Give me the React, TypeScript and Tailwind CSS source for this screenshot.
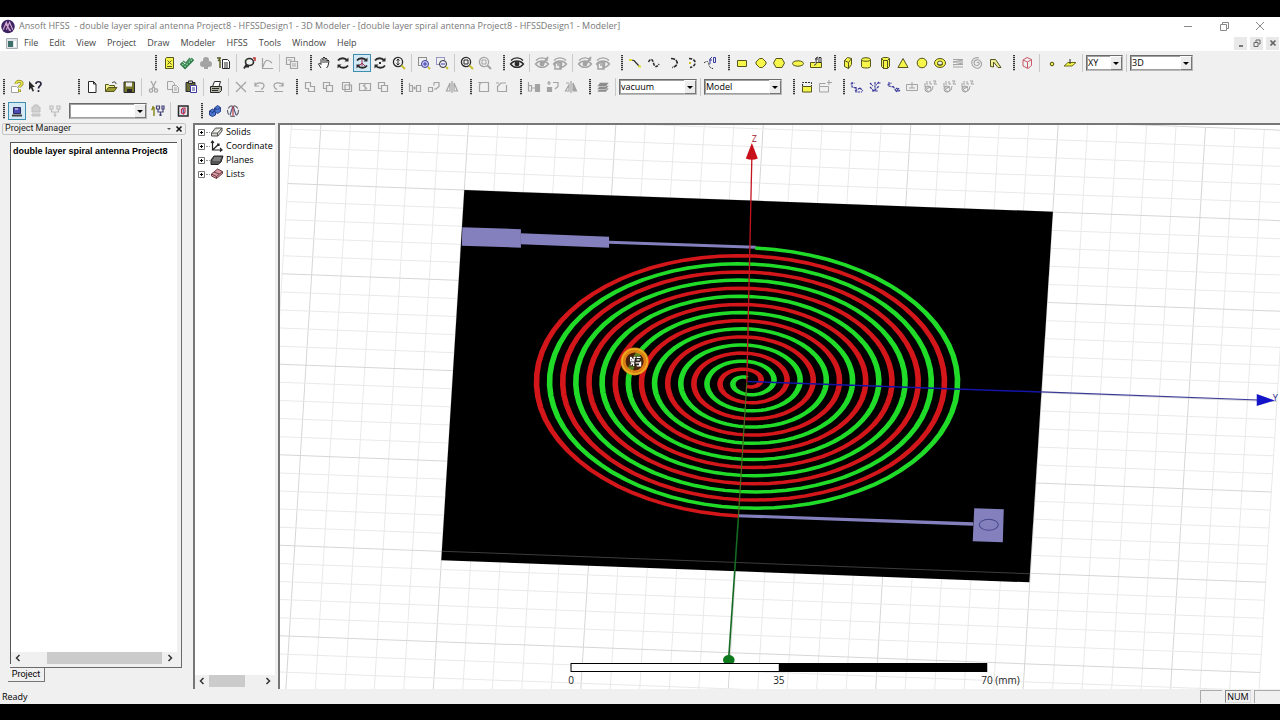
import React from "react";

const K = "#2a2a2a";
const G = "#a3a3a3";
const Y = "#f6f64a";
const O = "#55551c";
const B = "#3b3b9c";

const rot = (
  <g fill="none" stroke={K} strokeWidth="1.8">
    <path d="M3 5.5C5 2.5 10 2.5 12.5 5.5M13 10.5C11 13.5 6 13.5 3.500 10.500" />
    <path d="M13.500 2.500v4h-4zM2.500 13.500v-4h4z" fill={K} stroke="none" />
  </g>
);
const eye = (c: string) => (
  <g fill="none" stroke={c} strokeWidth="1.3">
    <path d="M2 5.500C5 2 11 2 14 5.500M1.500 9C5 5 11 5 14.500 9C11 13.500 5 13.500 1.500 9z" />
    <circle cx="8" cy="9" r="1.800" fill={c} />
  </g>
);
const lens = (c: string, h: string) => (
  <g fill="none" stroke={c} strokeWidth="1.300">
    <circle cx="7" cy="7" r="4.600" />
    <path d="M10.500 10.500l3.500 3.500" stroke={h} strokeWidth="2" />
  </g>
);
const axes = (k: number) => (
  <g fill="none" stroke={B} strokeWidth="1.200" strokeDasharray="2.500 .8">
    <path d={k === 1 ? "M3 3v5l4 1M1.500 5l4-1M7 8v5h6M6 12l5-3M11 9l3 3" : k === 2 ? "M8 3v9M3 8l4 4 5-5M3 4l3 3m6-4l-3 3M5 12h6M11 4h3" : "M3 3v4l4 1M1.500 6l4-2M7 7l3 5h4M10 9l4 3M10 13l3-4"} />
  </g>
);
const grayAxes = (
  <g fill="none" stroke={G}>
    <path d="M3 4v4l3 5 4-2 1-4M3 8h6M5 2v4M8 2v3h2M11 2h3l-2 3h3M5 10l3-2" />
    <circle cx="6" cy="10" r="3" />
  </g>
);

const art: Record<string, React.ReactNode> = {
  note: (<g><path d="M4.500 3.500l1-1h7v11h-8z" fill={Y} stroke={O} /><path d="M6.500 5.500l4 4M10.500 5.500l-4 4M6 11.500h5" stroke={O} /></g>),
  check: (<g fill="none"><path d="M2 8l4 4 8-8" stroke="#2b7a44" strokeWidth="3.400" /><path d="M3 9l3 2.500 7-7" stroke="#8ed0a4" strokeWidth="1.200" strokeDasharray="2 1" /><path d="M4 6l3 2 4-5" stroke="#3f8a58" strokeWidth="1.500" /></g>),
  club: (<g fill={G}><circle cx="8" cy="5" r="3" /><circle cx="5" cy="9" r="3" /><circle cx="11" cy="9" r="3" /><path d="M6 9h4v5H6z" /></g>),
  report: (<g><path d="M6.500 4.500h5l2 2v7h-7z" fill="#fff" stroke={K} /><path d="M8 8h4M8 10h4M8 12h4" stroke={K} /><path d="M1 3h4M4 5v8M2 6l2-2" stroke={O} strokeWidth="1.400" fill="none" /></g>),
  probe: (<g fill="none"><ellipse cx="8.500" cy="7" rx="4" ry="3.500" stroke={K} strokeWidth="1.600" /><path d="M5.500 9.500l-2.500 4M5 11.500h3" stroke={K} strokeWidth="1.800" /><path d="M12 3h2v3" stroke="#c03030" strokeWidth="1.500" /><path d="M6 3.500l-2 2" stroke="#3a8a4a" /></g>),
  plot: (<path d="M3.500 3v10.500H14M4 12C6 5 8 3 13 8" fill="none" stroke={G} strokeWidth="1.200" />),
  windows: (<g fill="#eee" stroke={G} strokeWidth="1.200"><path d="M2.500 2.500h8v7h-8z" /><path d="M6.500 6.500h7v7h-7z" /><path d="M4 5h4M8 9h4M8 11h4" /></g>),
  hand: (<path d="M5 13L2.500 9l1-1L5 9.500V4.500l1-1 1 1V3l1-1 1 1v1l1-1 1 1v2l1-1 1 1-1 5-1.500 2M7 4v4M9 4v4M11 5v3" fill="#fff" stroke={K} />),
  rot,
  rotAxis: (<g>{rot}<path d="M8 4v7M5 11l3-3 3 3" stroke="#a03050" fill="none" /></g>),
  rotPoint: (<g>{rot}<path d="M7 7h2v2H7z" fill={K} /></g>),
  zoomDyn: (<g>{lens(K, "#c8c030")}<path d="M7 4v6M5.500 5.500L7 4l1.500 1.500M5.500 8.500L7 10l1.500-1.500" stroke={K} fill="none" /></g>),
  zoomIn: (<g fill="none"><path d="M2.500 2.500h8v8h-8z" stroke={K} strokeDasharray="1 1" /><circle cx="9" cy="9" r="3.500" fill="#cfd0ff" stroke={B} /><path d="M7 9h4M9 7v4" stroke={B} /><path d="M12 12l2 2" stroke="#c8c030" strokeWidth="2" /></g>),
  zoomOut: (<g fill="none"><path d="M2.500 2.500h8v7h-8z" stroke={B} strokeDasharray="1 1" /><circle cx="9" cy="9" r="3.500" fill="#eef" stroke={K} /><path d="M7 9h4" stroke={B} /><path d="M12 12l2 2" stroke="#c8c030" strokeWidth="2" /></g>),
  fit: (<g>{lens(K, "#c8c030")}<path d="M5 5h4v4H5z" fill="none" stroke={K} /></g>),
  fitGray: (<g>{lens(G, G)}<path d="M5 5h4v4H5z" fill="none" stroke={G} /></g>),
  eye: eye(K),
  eyeCheck: (<g>{eye(G)}<path d="M7 6l2 3 5-7" stroke={G} fill="none" strokeWidth="2" /></g>),
  eyeBox: (<g>{eye(G)}<path d="M3 8h6v6H3zM5 10h3v4" stroke={G} fill="#eee" strokeWidth="1.500" /></g>),
  line: (<g fill="none"><path d="M4 5l3 .5 5 5.500" stroke={K} strokeWidth="1.200" /><path d="M2 4h3v2H2zM11 10.500h3v2h-3z" fill="#e0e030" /></g>),
  spline: (<path d="M2.500 7c2-4 4-3 5 1s3 5 5.500 1" fill="none" stroke={K} strokeWidth="1.500" strokeDasharray="3 1" />),
  arc: (<path d="M6 3.500c8 0 8 8 1 9" fill="none" stroke={K} strokeWidth="1.600" strokeDasharray="4 1" />),
  arcPt: (<g fill="none"><path d="M6 3.500c8 0 8 8 1 9" stroke={K} strokeWidth="1.600" strokeDasharray="3 1.500" /><path d="M6 7h2v2H6z" fill="#d0c020" /></g>),
  eqn: (<g fill="none"><path d="M2 8c3-3 5-1 5 1.500s2 4 4 4" stroke={K} strokeDasharray="2 1" /><path d="M8 9V4l2-2M7 5h3M11.500 2.500h2v5h-2z" stroke={B} /></g>),
  rect: (<path d="M3.500 5.500h9v6h-9z" fill={Y} stroke={O} />),
  oct: (<path d="M6.500 3.500h3l3.500 3.500v2l-3.500 3.500h-3L3 9V7z" fill={Y} stroke={O} />),
  hex: (<path d="M5 3.500h6l2.500 4.500-2.500 4.500H5L2.500 8z" fill={Y} stroke={O} />),
  ellipse: (<ellipse cx="8" cy="8.500" rx="5.500" ry="2.700" fill={Y} stroke={O} />),
  eqnSurf: (<g><path d="M2.500 7.500h11v5h-11z" fill={Y} stroke={O} /><path d="M6 10c3 0 2-2 2-7l2-1M7 4h3M11 2.500h2v5h-2z" fill="#fff" stroke={K} /></g>),
  box: (<g fill={Y} stroke={O}><path d="M4.500 5.500l3-3 4 1v6l-3 4-4-2z" /><path d="M4.500 5.500l4 2v6M8.500 7.500l3-4" fill="none" /></g>),
  cyl: (<g fill={Y} stroke={O}><path d="M3.500 4.500v7c0 2 9 2 9 0v-7" /><ellipse cx="8" cy="4.500" rx="4.500" ry="1.800" /></g>),
  prism: (<g fill={Y} stroke={O}><path d="M4.500 3.500l2-1h4l2 1v8l-2 2h-4l-2-2z" /><path d="M4.500 3.500l2 2h4l2-2M6.500 5.500v8M10.500 5.500v8" fill="none" /></g>),
  cone: (<path d="M8 3.500l5 9H3z" fill={Y} stroke={O} />),
  sphere: (<circle cx="8" cy="8" r="4.800" fill={Y} stroke={O} />),
  torus: (<g stroke={O} fill={Y}><ellipse cx="8" cy="8" rx="5.500" ry="4.500" /><ellipse cx="8" cy="8" rx="2.500" ry="2" fill="#eee" /><path d="M5 9c2 2 4 2 6 0" fill="none" /></g>),
  helix: (<path d="M3 4.500h10M3 7h10M3 9.500h10M3 12h10M13 5l-10 2M13 8l-10 2" stroke={G} fill="none" />),
  spiral: (<path d="M8 8c1-2 3 0 2 1.500S5 11 5 8s5-5 7-1-2 7-5 6-5-4-4-7 5-4 7-3" stroke={G} fill="none" strokeWidth="1.100" />),
  sweep: (<path d="M3.500 11.500V4.500h5l5.500 8h-3L6.500 7v5z" fill="#eeee9a" stroke={O} />),
  region: (<g fill="none" stroke="#c85864"><path d="M4 5l4-2.500 4.500 2v6L9 13.500 4 11z" /><path d="M4 5l4.500 2v6M8.500 7l4-2.500" /></g>),
  point: (<circle cx="8" cy="9" r="1.800" fill={Y} stroke="#4a4a10" />),
  plane: (<g><path d="M2 11l4-3.500h8L10 11z" fill={Y} stroke="#6c6c18" /><path d="M8 4v5" stroke={K} /></g>),
  help: (<g><path d="M2.500 7.500h5l2 2v4h-7z" fill="#fff" stroke={G} /><path d="M7 5c0-4 7-3 6 0-.5 1.500-2.500 1.500-2.500 3.500M10.500 10.500v2.500" fill="none" stroke="#8a8720" strokeWidth="3" /><path d="M7 5c0-4 7-3 6 0-.5 1.500-2.500 1.500-2.500 3.500M10.500 10.500v2" fill="none" stroke="#f0ec50" strokeWidth="1.500" /></g>),
  whatsThis: (<g><path d="M2 2l6 6H5.500l1.500 4-1.500.5L4 9l-2 2z" fill={K} /><path d="M9 5c0-3 5-3 5 0 0 2-2.500 2-2.500 4.500M11.500 11v2" fill="none" stroke="#26263c" strokeWidth="1.700" /></g>),
  new: (<path d="M4.500 2.500h5l2.500 2.500v8.500H4.500zM9.500 2.500V5H12" fill="#fff" stroke={K} />),
  open: (<g><path d="M2.500 12.500v-7h3l1 1h5v2" fill="#f0f090" stroke={O} /><path d="M2.500 12.500l3-4h8.500l-3 4z" fill="#9a9a30" stroke={O} /><path d="M9 4c2-2 4-1 4 1" fill="none" stroke={K} /></g>),
  save: (<g><path d="M3 3h10.500v10.500H3z" fill="#77772c" stroke={K} /><path d="M5 3.500h6v4H5z" fill="#eee" /><path d="M6 10h5v3H6z" fill={K} /></g>),
  cut: (<g fill="none" stroke={G} strokeWidth="1.200"><path d="M5 2l4 8M10 2L6 10" /><circle cx="5" cy="11.500" r="1.700" /><circle cx="10" cy="11.500" r="1.700" /></g>),
  copy: (<g fill="#eee" stroke={G}><path d="M2.500 2.500h5l2 2v6h-7z" /><path d="M7.500 6.500h4l2 2v5h-6zM9 9h3M9 11h3" /></g>),
  paste: (<g><path d="M3 3.500h9v9H3z" fill="#6c6c38" stroke={K} /><path d="M5.500 2h4v2.500h-4z" fill="#ccc" stroke={K} /><path d="M7.500 6.500h6v7h-6zM9 9h3M9 11h3" fill="#fff" stroke={B} /></g>),
  print: (<g><path d="M4.500 7.500l2-5h6l-1.500 5" fill="#fff" stroke={K} /><path d="M2.500 7.500h11v4l-2 2h-9z" fill="#b4b4a4" stroke={K} /><path d="M4 9.500h7M4 11.500h6" stroke={K} /></g>),
  del: (<path d="M3 3l10 10M13 3L3 13" stroke={G} strokeWidth="1.300" />),
  undo: (<path d="M3 6.500c2-4 9-3 9 0 0 2-1 3-3 4M3 3.500v3.500h4M3 12.500h9" fill="none" stroke={G} strokeWidth="1.200" />),
  redo: (<path d="M13 6.500c-2-4-9-3-9 0 0 2 1 3 3 4M13 3.500v3.500H9M4 12.500h9" fill="none" stroke={G} strokeWidth="1.200" />),
  bool1: (<path d="M3.500 3.500h5v4h4v5h-6v-3h-3z" fill="none" stroke={G} strokeWidth="1.200" />),
  bool2: (<path d="M3.500 3.500h6v3h-3v3h-3zM6.500 6.500h6v6h-6z" fill="none" stroke={G} strokeWidth="1.200" />),
  bool3: (<path d="M3.500 3.500h7v7h-7zM6 6h6.500v6.500H6z" fill="none" stroke={G} strokeWidth="1.200" />),
  bool4: (<path d="M2.500 4.500h11v7h-11zM6 6l4 4M8 4.500v2M8 9.500v2" fill="none" stroke={G} strokeWidth="1.200" />),
  dupLine: (<path d="M2.500 4v8.500h3V6.500h-3M9.500 6.500h4v6h-4zM6 9h3M7.500 7.500v3" fill="none" stroke={G} strokeWidth="1.200" />),
  dupRot: (<path d="M2.500 8.500h4v4h-4zM8 3.500h5v4L10 10M8 10h3M8 3.500v3" fill="none" stroke={G} strokeWidth="1.200" />),
  mirror: (<path d="M6 4v8H2.500zM8 2v12M10 4v8h3.500z" fill="none" stroke={G} strokeWidth="1.200" />),
  fillet: (<path d="M3.500 12.500V6.500c0-2 1-3 3-3h6v9zM2 3.500h3" fill="none" stroke={G} strokeWidth="1.200" />),
  chamfer: (<path d="M3.500 12.500V7.500L7 4h5M3.500 12.500h9V6M2 4h3" fill="none" stroke={G} strokeWidth="1.200" />),
  dupLine2: (<g stroke={G} fill="none" strokeWidth="1.200"><path d="M2.500 3v9h3V6.500h-3M6 9h3" /><path d="M9.500 5.500h4v7h-4z" fill={G} /></g>),
  dupRot2: (<g stroke={G} fill="none" strokeWidth="1.200"><path d="M2.500 8.500h4v4h-4z" fill={G} /><path d="M2 4h4M4 2v4M8 3.500h5v4L10 10" /></g>),
  mirror2: (<g stroke={G} fill="none" strokeWidth="1.200"><path d="M6 6v6H2.500zM8 2v12M3 4h3" /><path d="M10 4v8h3.500z" fill={G} /></g>),
  layers: (<g fill="#8c8c8c" stroke="#eee" strokeWidth=".5"><path d="M2 13l3-4h9l-3 4z" /><path d="M2 10.500l3-4h9l-3 4z" /><path d="M2 7.500l3-4h9l-3 4z" /></g>),
  face: (<g><path d="M3.500 7.500h9v5.500h-9z" fill={Y} stroke={O} /><path d="M3.500 7V3.500h9V7" fill="none" stroke={K} strokeDasharray="2 1" /></g>),
  faceAdd: (<path d="M2.500 7.500h9v5.500h-9zM2.500 7V4.500h6M12 1v5M10 3.500h5" fill="none" stroke={G} />),
  cs1: axes(1),
  cs2: axes(2),
  cs3: axes(3),
  csRect: (<path d="M2.500 5.500h11v6h-11zM8 3v6M5 9h6" fill="none" stroke={G} />),
  csg: grayAxes,
  ana1: (<g><path d="M4.500 4.500h7v6h-7z" fill="#4a4ab0" stroke="#2b2b62" /><path d="M3 12.500h10" stroke="#444" strokeWidth="2" /><path d="M6 6h3" stroke="#fff" /></g>),
  ana2: (<path d="M6 2h4v2h2v5H4V4h2zM4 11h8v2H4z" fill="#d0d0d0" stroke="#c0c0c0" />),
  ana3: (<path d="M3 3h3v3H3zM10 3h3v3h-3zM4.500 6v3h7V6M8 9v5M6.500 12h3" fill="none" stroke="#bbb" strokeWidth="1.200" />),
  tree: (<g fill="none"><path d="M4 4v9M2 4h2M1.500 7l2.500-3" stroke="#8a8a20" strokeWidth="1.500" /><path d="M6.500 3h3v3h-3zM12 3h2v3h-2zM8 6v3h5V6M10.500 9v4M9 12h3" stroke="#444478" strokeWidth="1.200" /></g>),
  alarm: (<g><path d="M3.500 3h9.500v10H3.500z" fill="#e4e4f0" stroke={K} strokeWidth="1.500" /><path d="M6.500 10V6.500L8 5h2v4l-1.500 2z" fill="none" stroke="#c03040" strokeWidth="1.200" /><path d="M8.300 6v4" stroke={B} /></g>),
  cubes: (<g fill="#4a78d0" stroke="#28408c"><path d="M2.500 8l3-2 3 2v4l-3 1.500-3-1.500z" /><path d="M7.500 5l3-2.500 3 2v4l-3 2-3-2z" /><path d="M5 10.500l4-5M2.500 8l3 1.500 3-1.500M7.500 5l3 1.500 3-2" fill="none" /></g>),
  compass: (<g fill="none" strokeWidth="1.200"><circle cx="8" cy="8" r="5.500" stroke="#667" strokeDasharray="5 1.500" /><path d="M8 3L5 12M8 3l3 9" stroke="#505890" /><path d="M8 3v10" stroke="#c04040" /></g>),
};

function Tool({ name, active }: { name: string; active?: boolean }) {
  return (
    <button
      type="button"
      aria-label={name}
      className={
        active
          ? "flex h-[18px] w-[18px] shrink-0 items-center justify-center bg-[#d3e9f5] outline-1 outline-offset-[-1px] outline-[#3f8fae]"
          : "flex h-[18px] w-[18px] shrink-0 items-center justify-center"
      }
    >
      <svg viewBox="0 0 16 16" className="h-4 w-4">
        {art[name]}
      </svg>
    </button>
  );
}

function Handle({ first }: { first?: boolean }) {
  return (
    <span
      className={`${first ? "" : "ml-2"} mr-0.5 h-4 w-1 shrink-0 bg-[repeating-linear-gradient(to_bottom,#3a3a3a_0px,#3a3a3a_1px,#bdbdbd_1px,#bdbdbd_2px)] bg-clip-content px-px`}
    />
  );
}

const Sep = () => <span className="mx-[3px] h-[18px] w-px shrink-0 bg-[#c9c9c9]" />;

function Tools({ names, width, active }: { names: string; width: string; active?: string }) {
  return (
    <div className={`flex shrink-0 justify-between ${width}`}>
      {names.split(" ").map((n, i) => (
        <Tool key={i} name={n} active={n === active} />
      ))}
    </div>
  );
}

function Combo({ label, value, width }: { label: string; value: string; width: string }) {
  return (
    <span className={`relative flex h-4 shrink-0 border border-[#b8b8b8] border-t-[#6c6c6c] border-l-[#6c6c6c] bg-white ${width}`}>
      <select aria-label={label} defaultValue={value} className="w-full appearance-none bg-transparent pl-px text-[9px] leading-[14px] text-black outline-1 outline-offset-[-1px] outline-[#a0a0a0]">
        <option>{value}</option>
      </select>
      <span className="pointer-events-none absolute inset-y-0 right-0 flex w-3 items-center justify-center border border-[#fafafa] border-r-[#777] border-b-[#777] bg-[#ececec]">
        <svg viewBox="0 0 6 3" className="h-[3px] w-1.5"><path d="M0 0h6L3 3z" /></svg>
      </span>
    </span>
  );
}

function HScroll({ thumb }: { thumb: string }) {
  return (
    <div className="flex h-3 items-center bg-[#f0f0f0]">
      <button type="button" aria-label="Scroll left" className="flex h-3 w-[14px] items-center justify-center">
        <svg viewBox="0 0 8 8" className="h-2 w-2"><path d="M5.500 1L2.500 4l3 3" fill="none" stroke="#333" strokeWidth="1.500" /></svg>
      </button>
      <div className="flex h-full flex-1"><div className={`h-full bg-[#cbcbcb] ${thumb}`} /></div>
      <button type="button" aria-label="Scroll right" className="flex h-3 w-[14px] items-center justify-center">
        <svg viewBox="0 0 8 8" className="h-2 w-2"><path d="M2.500 1l3 3-3 3" fill="none" stroke="#333" strokeWidth="1.500" /></svg>
      </button>
    </div>
  );
}

const menus = ["File", "Edit", "View", "Project", "Draw", "Modeler", "HFSS", "Tools", "Window", "Help"];

const treeItems: { label: string; icon: React.ReactNode }[] = [
  { label: "Solids", icon: <path d="M1.500 8l4-5h6.500v3l-4 5h-6.500zM1.500 8h6l4.500-5M7.500 8v3" fill="#d6d6cc" stroke="#555" /> },
  { label: "Coordinate", icon: <path d="M2.500 2v9H12M2.500 11L9 5M1 4l1.500-2L4 4M10 9l2 2-2 1.500M7 5h2v2" fill="none" stroke="#222" strokeWidth="1.200" /> },
  { label: "Planes", icon: <g><path d="M1 7l3-4h9l-2 6-3 2.500H1z" fill="#555" stroke="#222" /><path d="M3 7h7M4 5h7" stroke="#aaa" /></g> },
  { label: "Lists", icon: <g><path d="M1.500 7l6-5 5 2.500v2l-6 5-5-2.500z" fill="#d89aa4" stroke="#6e3a42" /><path d="M1.500 7l5 2.500 6-5M6.500 9.500v2M4 5l5 2" fill="none" stroke="#6e3a42" /></g> },
];

const TURNS = 8;
const OUTER = 216.4;
const PITCH = 26.2;

function spiral(start: number) {
  const steps = TURNS * 72;
  let d = "";
  for (let i = 0; i <= steps; i++) {
    const turn = i / 72;
    const r = OUTER - PITCH * turn;
    const a = start + turn * 2 * Math.PI;
    d += `${i ? "L" : "M"}${(r * Math.cos(a)).toFixed(1)} ${(r * Math.sin(a)).toFixed(1)}`;
  }
  return d;
}

function Grid() {
  const at = (i: number, j: number) => [465 + i * 29.37 - j * 1.12, 190 + i * 1.1 + j * 18.03];
  const lines: React.ReactNode[] = [];
  for (let i = -6; i <= 28; i++) {
    const [x1, y1] = at(i, -5);
    const [x2, y2] = at(i, 30);
    lines.push(<line key={`c${i}`} x1={x1} y1={y1} x2={x2} y2={y2} stroke={i % 5 === 0 ? "#d6d6d6" : "#e9e9e9"} />);
  }
  for (let j = -5; j <= 30; j++) {
    const [x1, y1] = at(-6, j);
    const [x2, y2] = at(28, j);
    lines.push(<line key={`r${j}`} x1={x1} y1={y1} x2={x2} y2={y2} stroke={j % 5 === 0 ? "#d6d6d6" : "#e9e9e9"} />);
  }
  return <g>{lines}</g>;
}

function Modeler() {
  return (
    <svg viewBox="281 125 1000 563" preserveAspectRatio="xMinYMin slice" className="block h-full w-full" role="img" aria-label="Spiral antenna model">
      <Grid />
      <path d="M465 190L1052.500 211.500 1029 581.500 442 559.500z" fill="#000" />
      <path d="M442.500 550.500L1029.500 573" stroke="#3c3c3c" fill="none" />
      <g fill="#8480bd">
        <path d="M463 227L521.500 229V247.500L462.500 245.500z" />
        <path d="M521.500 233L609.500 236.500V247.500L521.500 244z" />
        <path d="M609.500 240.500L756 245.500V248.500L609.500 243.500z" />
        <path d="M738 513.500L973 521.500V525L738 516.500z" />
        <path d="M974 507.500L1003.500 508.500 1002.500 541.500 972.500 540.500z" />
      </g>
      <ellipse cx="988.500" cy="524" rx="9.500" ry="5.500" fill="none" stroke="#45458c" />
      <g transform="matrix(1 .0375 -.0383 .618 747.2 381.5)" fill="none" strokeWidth="5.600">
        <path d={spiral(Math.PI / 2)} stroke="#d3161a" />
        <path d={spiral(-Math.PI / 2)} stroke="#20dc28" />
      </g>
      <path d="M747 382L752 158" stroke="#c41420" strokeWidth="1.300" />
      <path d="M752 143L758 158.500Q752 161 746 158.500z" fill="#c8101a" />
      <path d="M748 381L1041 391.500" stroke="#1414a8" strokeWidth="1.500" />
      <path d="M1041 391.500L1258 399.500" stroke="#3a3a98" strokeWidth="1.200" />
      <path d="M1274 400L1256 393.500V405.500z" fill="#1414c8" />
      <path d="M747 382L738.500 518" stroke="#4e6a20" strokeWidth="1.200" />
      <path d="M738.500 518L729 656" stroke="#146a22" strokeWidth="1.600" />
      <ellipse cx="729" cy="659" rx="5.800" ry="5" fill="#0c7a1c" />
      <text x="752" y="142" fontSize="9" fill="#a01830">Z</text>
      <text x="1272" y="401" fontSize="9" fill="#1a1a90">Y</text>
      <circle cx="635" cy="361" r="11.500" fill="#8c3a10" fillOpacity=".55" stroke="#ec8a14" strokeWidth="5" strokeOpacity=".9" />
      <circle cx="635" cy="361" r="12.500" fill="none" stroke="#f0c428" strokeWidth="1.500" strokeOpacity=".7" />
      <path d="M630 356h11v10h-11z" fill="#2c2018" />
      <path d="M631 356.500v4h3l-3-4M636 357h-1.500v3M637 357h4M637 359.500h3M631 365l3-3M631 362.500h3v3M636 362.500h4v3h-3M641 361v5" fill="none" stroke="#fff" strokeWidth="1.200" />
      <path d="M571.500 662.500h208v8h-208z" fill="#fff" stroke="#000" />
      <path d="M779 662h208v9H779z" fill="#000" />
      <g fontSize="10" fill="#222">
        <text x="571.500" y="683" textAnchor="middle">0</text>
        <text x="779" y="683" textAnchor="middle">35</text>
        <text x="981" y="683">70 (mm)</text>
      </g>
    </svg>
  );
}

export default function App() {
  return (
    <div className="flex h-screen flex-col overflow-hidden bg-black font-['Open_Sans','Noto_Sans',sans-serif] text-[9px] text-black">
      <div className="mt-[17px] mb-4 flex min-h-0 flex-1 flex-col bg-[#f0f0f0]">
        <header className="flex h-[18px] shrink-0 items-center bg-white pl-px">
          <svg viewBox="0 0 14 14" className="h-[15px] w-[15px]">
            <circle cx="6.500" cy="7" r="6.300" fill="#3d2360" />
            <path d="M2 10L5 3l3 8M5 10l3-7 3 7M4 4l5 7" fill="none" stroke="#d4a8d0" strokeWidth="1.100" />
          </svg>
          <h1 className="ml-[3px] text-[9px] whitespace-pre text-[#787878]">Ansoft HFSS  - double layer spiral antenna Project8 - HFSSDesign1 - 3D Modeler - [double layer spiral antenna Project8 - HFSSDesign1 - Modeler]</h1>
          <div className="ml-auto flex gap-6 pr-[14px]">
            <button type="button" aria-label="Minimize"><svg viewBox="0 0 12 12" className="h-3 w-3"><path d="M2 6.500h8" stroke="#888" /></svg></button>
            <button type="button" aria-label="Restore"><svg viewBox="0 0 12 12" className="h-3 w-3"><path d="M2.500 4.500h6v6h-6zM4.500 4V2.500h6v6H9" fill="none" stroke="#888" /></svg></button>
            <button type="button" aria-label="Close"><svg viewBox="0 0 12 12" className="h-3 w-3"><path d="M2 2l8 8M10 2l-8 8" stroke="#888" /></svg></button>
          </div>
        </header>
        <nav className="flex h-4 shrink-0 items-center bg-white pl-1.5 text-[#444]">
          <svg viewBox="0 0 12 11" className="h-[11px] w-3"><path d="M.5.500h11v10H.5z" fill="#dfe4e8" stroke="#a8b0b4" /><path d="M2 3h5v6H2z" fill="#3f6f6a" /><path d="M8 3h2v6H8z" fill="#fff" /></svg>
          <div className="ml-1.5 flex gap-[11px]">
            {menus.map((m) => (<button type="button" key={m}>{m}</button>))}
          </div>
          <div className="ml-auto flex gap-[3px] pr-px">
            {["M4 9h4", "M3 5.500h4v4H3zM5 5V3h4v4H7.500", "M3.500 3.500l5 5M8.500 3.500l-5 5"].map((d, i) => (
              <button type="button" key={i} aria-label={["Minimize view", "Restore view", "Close view"][i]} className="flex h-[13px] w-[13px] items-center justify-center bg-[#e9e9e9]">
                <svg viewBox="0 0 12 12" className="h-3 w-3"><path d={d} fill="none" stroke="#666" strokeWidth={i === 1 ? 1 : 1.7} /></svg>
              </button>
            ))}
          </div>
        </nav>

        <div className="flex h-6 shrink-0 items-center pl-[154px]">
          <Handle first /><Tools names="note check club report" width="w-[73px]" /><Sep /><Tools names="probe plot" width="w-9" /><Sep /><Tools names="windows" width="w-[18px]" />
          <Handle /><Tools names="hand rot rotAxis rotPoint zoomDyn" width="w-[93px]" active="rotAxis" /><Sep /><Tools names="zoomIn zoomOut" width="w-9" /><Sep /><Tools names="fit fitGray" width="w-9" />
          <Handle /><Tools names="eye" width="w-[18px]" /><Sep /><Tools names="eyeCheck eyeBox" width="w-9" /><Sep /><Tools names="eyeCheck eyeBox" width="w-9" />
          <Handle /><Tools names="line spline arc arcPt eqn" width="w-[93px]" />
          <Handle /><Tools names="rect oct hex ellipse eqnSurf" width="w-[92px]" />
          <Handle /><Tools names="box cyl prism cone sphere torus helix spiral sweep" width="w-[165px]" />
          <Handle /><Tools names="region" width="w-[18px]" /><Sep /><Tools names="point plane" width="w-9" /><Sep />
          <Combo label="Drawing plane" value="XY" width="w-[37px]" /><Sep /><Combo label="Movement mode" value="3D" width="w-[63px]" />
        </div>
        <div className="flex h-6 shrink-0 items-center pl-0.5">
          <Handle first /><Tools names="help whatsThis" width="w-9" />
          <span className="w-[25px] shrink-0" />
          <Handle /><Tools names="new open save" width="w-[55px]" /><Sep /><Tools names="cut copy paste" width="w-[55px]" /><Sep /><Tools names="print" width="w-[18px]" /><Sep /><Tools names="del undo redo" width="w-[55px]" />
          <Handle /><Tools names="bool1 bool2 bool3 bool4 bool2" width="w-[91px]" />
          <Handle /><Tools names="dupLine dupRot mirror" width="w-[55px]" />
          <Handle /><Tools names="fillet chamfer" width="w-9" />
          <Handle /><Tools names="dupLine2 dupRot2 mirror2" width="w-[55px]" />
          <Handle /><Tools names="layers" width="w-[18px]" /><Sep />
          <Combo label="Material" value="vacuum" width="w-[78px]" /><Sep /><Combo label="Model type" value="Model" width="w-[78px]" />
          <span className="w-0.5 shrink-0" />
          <Handle /><Tools names="face faceAdd" width="w-9" />
          <Handle /><Tools names="cs1 cs2 cs3 csRect csg csg csg" width="w-[128px]" />
        </div>
        <div className="flex h-6 shrink-0 items-center pl-0.5">
          <Handle first /><Tools names="ana1 ana2 ana3" width="w-14" active="ana1" /><span className="w-[5px] shrink-0" />
          <Combo label="Setup" value="" width="w-[78px]" /><span className="w-0.5 shrink-0" /><Tools names="tree" width="w-[18px]" /><Sep /><Tools names="alarm" width="w-[18px]" />
          <Handle /><Tools names="cubes compass" width="w-9" />
        </div>

        <main className="flex min-h-0 flex-1">
          <section className="flex w-[186px] shrink-0 flex-col pl-0.5">
            <div className="flex h-3 shrink-0 items-center rounded-xs border border-[#c4c4c4] pr-0.5 pl-0.5">
              <h2 className="font-['Roboto',sans-serif] text-[9px] text-[#222]">Project Manager</h2>
              <svg viewBox="0 0 6 3" className="ml-auto h-0.5 w-1"><path d="M0 0h6L3 3z" fill="#555" /></svg>
              <button type="button" aria-label="Close panel" className="ml-1"><svg viewBox="0 0 8 8" className="h-2 w-2"><path d="M1.500 1.500l5 5M6.500 1.500l-5 5" stroke="#111" strokeWidth="1.500" /></svg></button>
            </div>
            <div className="mt-1 mr-1 ml-2 flex min-h-0 flex-1 flex-col border-r border-b border-[#6a6a6a] pt-[3px] pr-1">
              <div className="flex min-h-0 flex-1 flex-col border-t border-l border-[#555] bg-white">
                <p className="flex-1 pt-px pl-0.5 font-['Liberation_Sans',sans-serif] text-[9px] leading-[14px] font-bold whitespace-nowrap">double layer spiral antenna Project8</p>
                <HScroll thumb="ml-[22px] w-[115px]" />
              </div>
              <div className="h-[3px] shrink-0" />
            </div>
            <button type="button" className="mb-[7px] ml-1.5 flex h-[14px] w-[37px] shrink-0 items-center justify-center border-r border-b border-[#777] font-['Roboto',sans-serif]">Project</button>
          </section>
          <section className="ml-[7px] flex w-[82px] shrink-0 flex-col border-t-2 border-l-2 border-[#777] bg-white">
            <ul className="flex-1">
              {treeItems.map((t) => (
                <li key={t.label} className="flex h-[14px] items-center pl-0.5">
                  <svg viewBox="0 0 9 9" className="h-[9px] w-[9px] shrink-0"><path d="M1.500 1.500h6v6h-6z" fill="#fff" stroke="#777" /><path d="M3 4.500h3M4.500 3v3" stroke="#000" /></svg>
                  <span className="w-1 shrink-0 border-t border-dotted border-[#999]" />
                  <svg viewBox="0 0 14 14" className="h-[14px] w-[14px] shrink-0">{t.icon}</svg>
                  <span className="ml-[2px] leading-[14px]">{t.label}</span>
                </li>
              ))}
            </ul>
            <HScroll thumb="w-9" />
            <div className="h-0.5 shrink-0 bg-[#f0f0f0]" />
          </section>
          <section className="ml-[3px] min-w-0 flex-1 border-t-2 border-l-2 border-[#777] bg-white">
            <Modeler />
          </section>
        </main>
        <footer className="flex h-[15px] shrink-0 items-center gap-[3px] pl-0.5">
          <span>Ready</span>
          <span className="ml-auto h-[13px] w-[22px] border-t border-l border-[#aaa]" />
          <span className="flex h-[13px] w-[26px] items-center justify-center border border-[#ddd] border-t-[#888] border-l-[#888]">NUM</span>
          <span className="h-[13px] w-[26px] border-t border-l border-[#aaa]" />
        </footer>
      </div>
    </div>
  );
}
